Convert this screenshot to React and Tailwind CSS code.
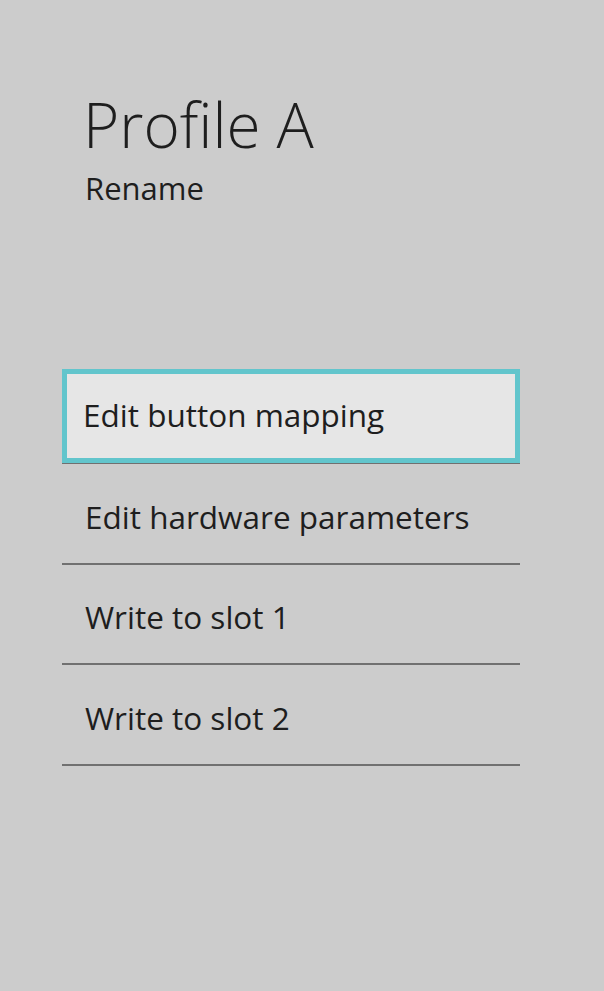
export default function App() {
  const items = ["Edit hardware parameters", "Write to slot 1", "Write to slot 2"];
  return (
    <div className="w-[604px] h-[991px] bg-[#cccccc] text-[#1e1e1e] overflow-hidden" style={{ fontFamily: '"Open Sans", "Noto Sans", sans-serif' }}>
      <div className="pl-[83px] pt-[84px]">
        <div className="text-[62px] font-light leading-[80px]">Profile A</div>
        <div className="text-[31px] leading-[40px] mt-[4px] pl-[2px]">Rename</div>
      </div>
      <div className="ml-[62px] w-[458px] mt-[155px]">
        <div className="h-[101px] border-b-2 border-[#707070] pt-[6px]">
          <div className="h-[94px] border-[5px] border-[#62c5cc] bg-[#e6e6e6] flex items-center pl-[16px] text-[31.5px] pb-[2px]">
            Edit button mapping
          </div>
        </div>
        {items.map((t) => (
          <div key={t} className="h-[100.5px] border-b-2 border-[#707070] flex items-center pl-[23px] text-[31.5px] pt-[6px]">
            {t}
          </div>
        ))}
      </div>
    </div>
  );
}
